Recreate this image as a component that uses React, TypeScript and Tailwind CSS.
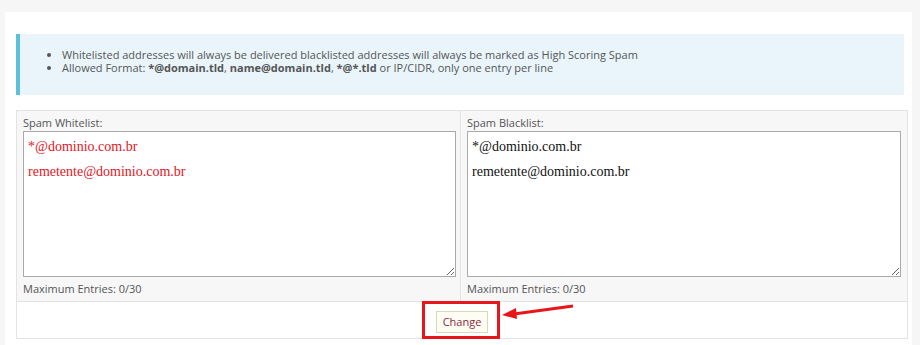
export default function App() {
  const font = { fontFamily: '"Open Sans", "Liberation Sans", sans-serif' };
  return (
    <div className="min-h-screen bg-[#f6f6f6] pt-[12px] pl-[5px] pr-[8px]" style={font}>
      <div className="bg-white pl-[11px] pr-[4px] pt-[22px] pb-[20px]">
        {/* Info box */}
        <div className="w-[888px] border-l-4 border-[#5bc0de] bg-[#e9f5fb] pt-[14px] pb-[21px] text-[11px] leading-[13px] text-[#555]">
          <ul className="list-disc pl-[42px]">
            <li>Whitelisted addresses will always be delivered blacklisted addresses will always be marked as High Scoring Spam</li>
            <li>
              Allowed Format: <b>*@domain.tld</b>, <b>name@domain.tld</b>, <b>*@*.tld</b> or IP/CIDR, only one entry per line
            </li>
          </ul>
        </div>

        {/* Lists table */}
        <div className="mt-[15px] w-[892px] border border-[#e3e3e3]">
          <div className="grid grid-cols-[444px_1fr] bg-[#f7f7f7]">
            <ListCell
              label="Spam Whitelist:"
              color="text-[#e4141e]"
              className="border-r border-[#e3e3e3] pl-[6px] pr-[4px]"
            />
            <ListCell label="Spam Blacklist:" color="text-[#111]" className="pl-[6px] pr-[6px]" />
          </div>
          <div className="flex h-[37px] items-center justify-center border-t border-[#e3e3e3] bg-white">
            <div className="relative">
              <button className="h-[22px] border border-[#d9d9b8] bg-[#fdfdf4] px-[6px] text-[11px] leading-[20px] text-[#8a2d3c]">
                Change
              </button>
              <div className="pointer-events-none absolute -left-[14px] -right-[12px] -top-[7px] -bottom-[6px] border-[3px] border-[#e8161a]" />
              <svg
                className="pointer-events-none absolute left-[66px] -top-[4px]"
                width="72"
                height="16"
                viewBox="0 0 72 16"
              >
                <line x1="12" y1="10" x2="71" y2="2" stroke="#e8161a" strokeWidth="3" />
                <polygon points="0,11 14,4 15,15" fill="#e8161a" />
              </svg>
            </div>
          </div>
        </div>
      </div>
    </div>
  );
}

function ListCell({ label, color, className }: { label: string; color: string; className: string }) {
  return (
    <div className={`pt-[4px] pb-[4px] ${className}`}>
      <div className="text-[11px] leading-[16px] text-[#555]">{label}</div>
      <textarea
        readOnly
        defaultValue={"*@dominio.com.br\nremetente@dominio.com.br"}
        className={`block h-[146px] w-full resize-y border border-[#aaa] bg-white px-[4px] pt-[2px] text-[14px] leading-[25px] outline-none ${color}`}
        style={{ fontFamily: '"Liberation Serif", "Times New Roman", serif' }}
      />
      <div className="pt-[4px] text-[11px] leading-[16px] text-[#555]">Maximum Entries: 0/30</div>
    </div>
  );
}
